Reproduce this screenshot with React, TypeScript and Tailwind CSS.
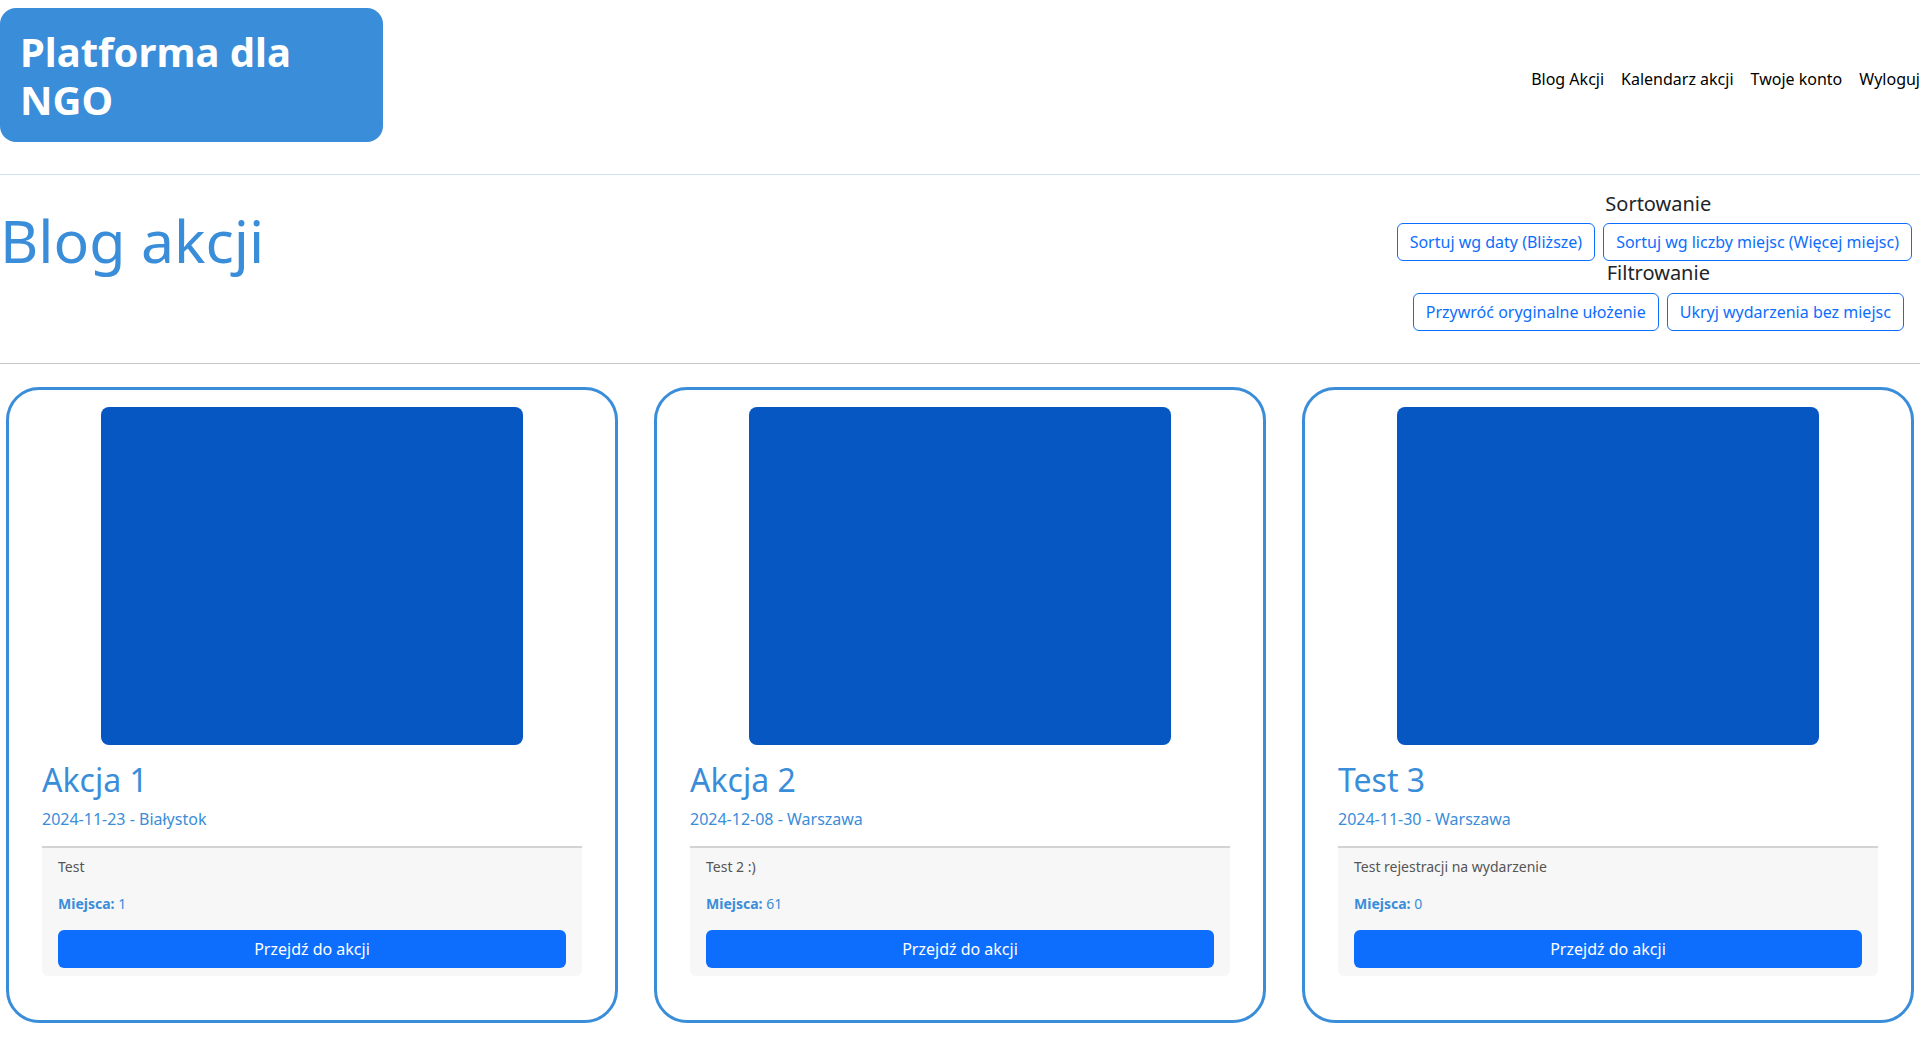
import React from "react";

const cards = [
  { title: "Akcja 1", meta: "2024-11-23 - Białystok", desc: "Test", seats: "1" },
  { title: "Akcja 2", meta: "2024-12-08 - Warszawa", desc: "Test 2 :)", seats: "61" },
  { title: "Test 3", meta: "2024-11-30 - Warszawa", desc: "Test rejestracji na wydarzenie", seats: "0" },
];

function OutlineBtn({ children }: { children: React.ReactNode }) {
  return (
    <button className="h-[38px] px-[12px] border border-[#0d6efd] rounded-[6px] text-[16px] leading-[24px] text-[#0d6efd] bg-white whitespace-nowrap">
      {children}
    </button>
  );
}

export default function App() {
  return (
    <div className="w-[1920px] min-h-[1042px] bg-white text-[#212529]" style={{ fontFamily: '"Noto Sans", "Open Sans", sans-serif' }}>
      <header className="flex items-center justify-between pt-2 pb-8 border-b border-[#cfe3f5]">
        <div className="w-[383px] h-[134px] bg-[#3a8dd9] rounded-[16px] pl-[20px] pt-[20px]">
          <h1 className="text-white font-bold text-[40px] leading-[48px]">
            <span className="block">Platforma dla</span>
            <span className="block">NGO</span>
          </h1>
        </div>
        <nav className="flex gap-[17px] mt-2 text-[16px] leading-[24px] text-black">
          <span>Blog Akcji</span>
          <span>Kalendarz akcji</span>
          <span>Twoje konto</span>
          <span>Wyloguj</span>
        </nav>
      </header>

      <section className="flex justify-between items-start pt-[16px] pb-[32px] border-b border-[#c6c6c6]">
        <h2 className="mt-[13px] text-[59px] leading-[72px] text-[#3a8dd9] font-normal">Blog akcji</h2>
        <div className="mr-[8px] flex flex-col items-center">
          <div className="pl-[8px] mt-[1px] text-[20px] leading-[24px] font-normal mb-[7px]">Sortowanie</div>
          <div className="flex gap-2">
            <OutlineBtn>Sortuj wg daty (Bliższe)</OutlineBtn>
            <OutlineBtn>Sortuj wg liczby miejsc (Więcej miejsc)</OutlineBtn>
          </div>
          <div className="pl-[8px] text-[20px] leading-[24px] font-normal mb-[8px]">Filtrowanie</div>
          <div className="flex gap-2 pl-[8px]">
            <OutlineBtn>Przywróć oryginalne ułożenie</OutlineBtn>
            <OutlineBtn>Ukryj wydarzenia bez miejsc</OutlineBtn>
          </div>
        </div>
      </section>

      <main className="flex gap-[36px] pl-[6px] pt-[23px]">
        {cards.map((c) => (
          <div key={c.title} className="w-[612px] border-[3px] border-[#3a8dd9] rounded-[33px] pt-[17px] px-[33px] pb-[44px] bg-white">
            <div className="mx-auto w-[422px] h-[338px] bg-[#0657c2] rounded-[8px]" />
            <h3 className="mt-[16px] mb-2 text-[32px] leading-[38px] text-[#3a8dd9] font-normal">{c.title}</h3>
            <p className="mb-[15px] text-[16px] leading-[24px] text-[#3a8dd9]">{c.meta}</p>
            <div className="border-t-2 border-[#d2d2d2] bg-[#f7f7f7] rounded-b-[6px] px-4 pt-2 pb-2">
              <p className="text-[14px] leading-[21px] text-[#555555] mb-4">{c.desc}</p>
              <p className="text-[14px] leading-[21px] text-[#3a8dd9] mb-4">
                <span className="font-bold">Miejsca:</span> {c.seats}
              </p>
              <button className="w-full h-[38px] bg-[#0d6efd] text-white rounded-[6px] text-[16px] leading-[24px]">
                Przejdź do akcji
              </button>
            </div>
          </div>
        ))}
      </main>
    </div>
  );
}
